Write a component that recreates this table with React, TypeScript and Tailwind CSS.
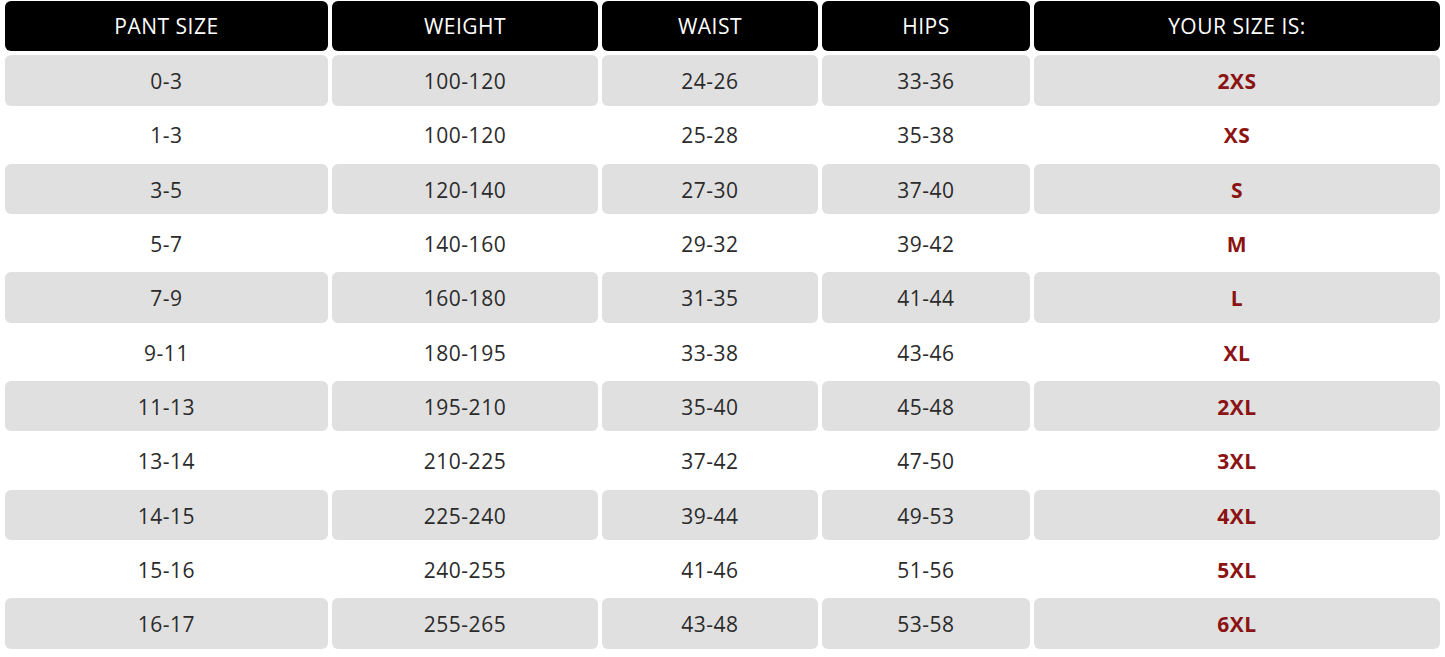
const rows = [
  ["0-3", "100-120", "24-26", "33-36", "2XS"],
  ["1-3", "100-120", "25-28", "35-38", "XS"],
  ["3-5", "120-140", "27-30", "37-40", "S"],
  ["5-7", "140-160", "29-32", "39-42", "M"],
  ["7-9", "160-180", "31-35", "41-44", "L"],
  ["9-11", "180-195", "33-38", "43-46", "XL"],
  ["11-13", "195-210", "35-40", "45-48", "2XL"],
  ["13-14", "210-225", "37-42", "47-50", "3XL"],
  ["14-15", "225-240", "39-44", "49-53", "4XL"],
  ["15-16", "240-255", "41-46", "51-56", "5XL"],
  ["16-17", "255-265", "43-48", "53-58", "6XL"],
];

const headers = ["PANT SIZE", "WEIGHT", "WAIST", "HIPS", "YOUR SIZE IS:"];

const grid = "grid grid-cols-[323px_266px_216px_208px_406px] gap-x-[4px]";

export default function App() {
  return (
    <div className="w-[1445px] h-[657px] bg-white px-[5px] pt-[1px] font-['Open_Sans',sans-serif]">
      <div className="flex flex-col gap-[4px]">
        <div className={grid}>
          {headers.map((h) => (
            <div key={h} className="h-[50.3px] rounded-[6px] bg-black text-white text-[21px] tracking-[0.5px] flex items-center justify-center pt-[1px]">
              {h}
            </div>
          ))}
        </div>
        {rows.map((r, i) => (
          <div key={i} className={grid}>
            {r.map((c, j) => (
              <div
                key={j}
                className={
                  "h-[50.3px] rounded-[6px] flex items-center justify-center text-[21px] tracking-[0.5px] pt-[3px] " +
                  (i % 2 === 0 ? "bg-[#e0e0e0] " : "bg-white ") +
                  (j === 4 ? "text-[#8b1313] font-bold" : "text-[#2b2b2b]")
                }
              >
                {c}
              </div>
            ))}
          </div>
        ))}
      </div>
    </div>
  );
}
